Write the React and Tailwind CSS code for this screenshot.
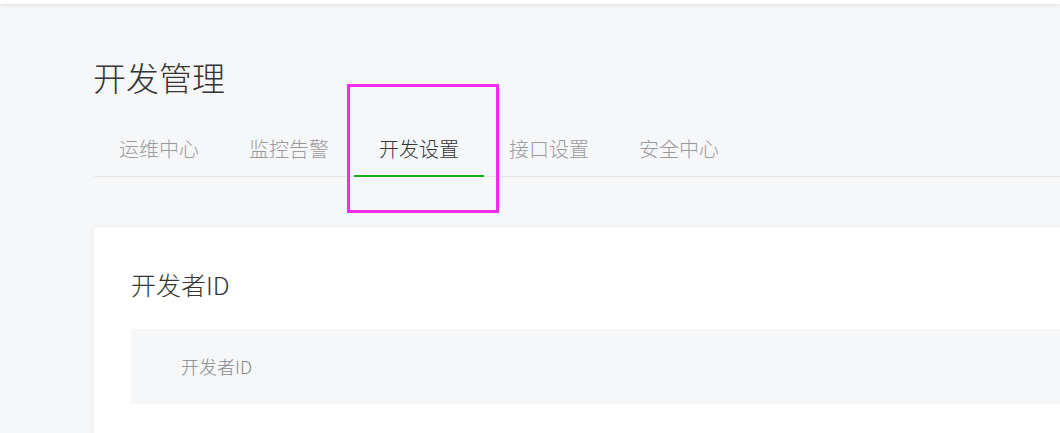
import React from 'react';

const tabs = ['运维中心', '监控告警', '开发设置', '接口设置', '安全中心'];

export default function App() {
  const active = 2;
  return (
    <div className="relative min-h-screen w-full overflow-hidden bg-[#f6f7f9] font-['Noto_Sans_CJK_SC','Noto_Sans',sans-serif] font-light">
      {/* top bar */}
      <div className="h-1 bg-white shadow-[0_1px_4px_rgba(0,0,0,0.12)]" />

      <div className="w-[1200px] pl-[93px] pt-[49px]">
        <h1 className="text-[33px] leading-[48px] text-[#353535]">开发管理</h1>

        {/* tabs */}
        <div className="ml-px mt-[21px] flex border-b border-[#e5e5e5]">
          {tabs.map((t, i) => (
            <div
              key={t}
              className={
                i === active
                  ? 'relative flex h-[54px] w-[130px] items-center justify-center text-[20px] text-[#353535]'
                  : 'relative flex h-[54px] w-[130px] items-center justify-center text-[20px] text-[#9a9a9a]'
              }
            >
              {t}
              {i === active && <span className="absolute -bottom-px left-0 h-[2px] w-full bg-[#1aad19]" />}
            </div>
          ))}
        </div>

        {/* card */}
        <div className="ml-px mt-[50px] min-h-[260px] rounded-[4px] bg-white pl-[37px] pt-[41px] shadow-[0_0_6px_rgba(0,0,0,0.05)]">
          <h2 className="text-[25px] leading-[32px] text-[#353535]">开发者ID</h2>
          <div className="mt-[29px] flex h-[75px] items-center bg-[#f6f7f9] px-[50px] text-[18px] text-[#888]">
            开发者ID
          </div>
        </div>
      </div>

      {/* annotation highlight */}
      <div className="pointer-events-none absolute left-[347px] top-[84px] h-[129px] w-[152px] border-[3px] border-[#f22cf0]" />
    </div>
  );
}
